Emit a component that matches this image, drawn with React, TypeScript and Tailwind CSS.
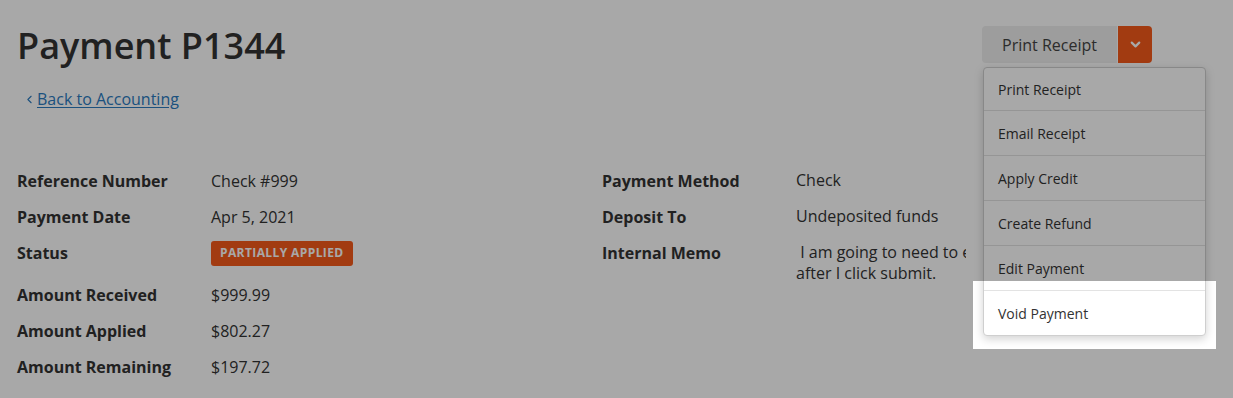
import { ChevronDown, ChevronLeft } from 'lucide-react';

const leftRows = [
    { label: 'Reference Number', value: 'Check #999' },
    { label: 'Payment Date', value: 'Apr 5, 2021' },
    { label: 'Status', value: 'badge' },
    { label: 'Amount Received', value: '$999.99' },
    { label: 'Amount Applied', value: '$802.27' },
    { label: 'Amount Remaining', value: '$197.72' },
];

const rightRows = [
    { label: 'Payment Method', value: 'Check' },
    { label: 'Deposit To', value: 'Undeposited funds' },
    { label: 'Internal Memo', value: '\u00a0I am going to need to edit this after I click submit.' },
];

const menuItems = ['Print Receipt', 'Email Receipt', 'Apply Credit', 'Create Refund', 'Edit Payment', 'Void Payment'];

export default function App() {
    return (
        <div className="relative w-[1233px] h-[398px] overflow-hidden bg-white font-['Open_Sans',sans-serif] text-[#333]">
            <div className="pl-[17px] pt-[20px]">
                {/* HEADER */}
                <div className="flex items-start justify-between pr-[81px]">
                    <div>
                        <h1 className="text-[36px] leading-[52px] font-semibold text-[#333]">Payment P1344</h1>
                        <a href="#" className="mt-[16px] ml-[6px] flex items-center text-[16px] leading-[22px] text-[#2b7bbf] underline underline-offset-2">
                            <ChevronLeft size={13} strokeWidth={2} className="mr-[1px]" />
                            Back to Accounting
                        </a>
                    </div>

                    <div className="relative mt-[6px] flex">
                        <button className="h-[37px] w-[135px] rounded-l-[4px] bg-[#eeeeee] text-left pl-[20px] text-[16px] text-[#444]">
                            Print Receipt
                        </button>
                        <button className="ml-px h-[37px] w-[34px] rounded-r-[4px] bg-[#f65a1b] flex items-center justify-center text-white">
                            <ChevronDown size={15} strokeWidth={3.5} />
                        </button>

                        {/* DROPDOWN */}
                        <div className="absolute left-[1px] top-[41px] z-10 w-[223px] rounded-[4px] border border-[#cfcfcf] bg-white shadow-[0_3px_10px_rgba(0,0,0,0.18)]">
                            {menuItems.map((item, i) => (
                                <div
                                    key={item}
                                    className={`flex items-center pl-[14px] text-[14px] text-[#333] ${i > 0 ? 'h-[45px] border-t border-[#e3e3e3]' : 'h-[42px]'}`}
                                >
                                    {item}
                                </div>
                            ))}
                        </div>
                    </div>
                </div>

                {/* DETAILS */}
                <div className="mt-[53px] grid grid-cols-[585px_364px]">
                    <div>
                        {leftRows.map((row) => (
                            <div key={row.label} className={`flex h-[36px] items-center ${row.value === 'badge' ? 'mb-[6px]' : ''}`}>
                                <div className="w-[194px] text-[16px] font-bold text-[#333]">{row.label}</div>
                                {row.value === 'badge' ? (
                                    <span className="h-[25px] rounded-[3px] bg-[#f65a1b] px-[9px] flex items-center text-[12px] font-bold tracking-[0.4px] text-white">
                                        PARTIALLY APPLIED
                                    </span>
                                ) : (
                                    <div className="text-[16px] text-[#333]">{row.value}</div>
                                )}
                            </div>
                        ))}
                    </div>
                    <div className="overflow-hidden">
                        {rightRows.map((row) => (
                            <div key={row.label} className="flex min-h-[36px] items-start pt-[7px]">
                                <div className="w-[194px] shrink-0 text-[16px] leading-[22px] font-bold text-[#333]">{row.label}</div>
                                <div className="w-[250px] shrink-0 text-[16px] leading-[21px] text-[#333]">{row.value}</div>
                            </div>
                        ))}
                    </div>
                </div>
            </div>

            {/* SPOTLIGHT OVERLAY */}
            <div className="absolute left-[973px] top-[281px] z-20 h-[68px] w-[243px] shadow-[0_0_0_3000px_rgba(0,0,0,0.34)]" />
        </div>
    );
}
